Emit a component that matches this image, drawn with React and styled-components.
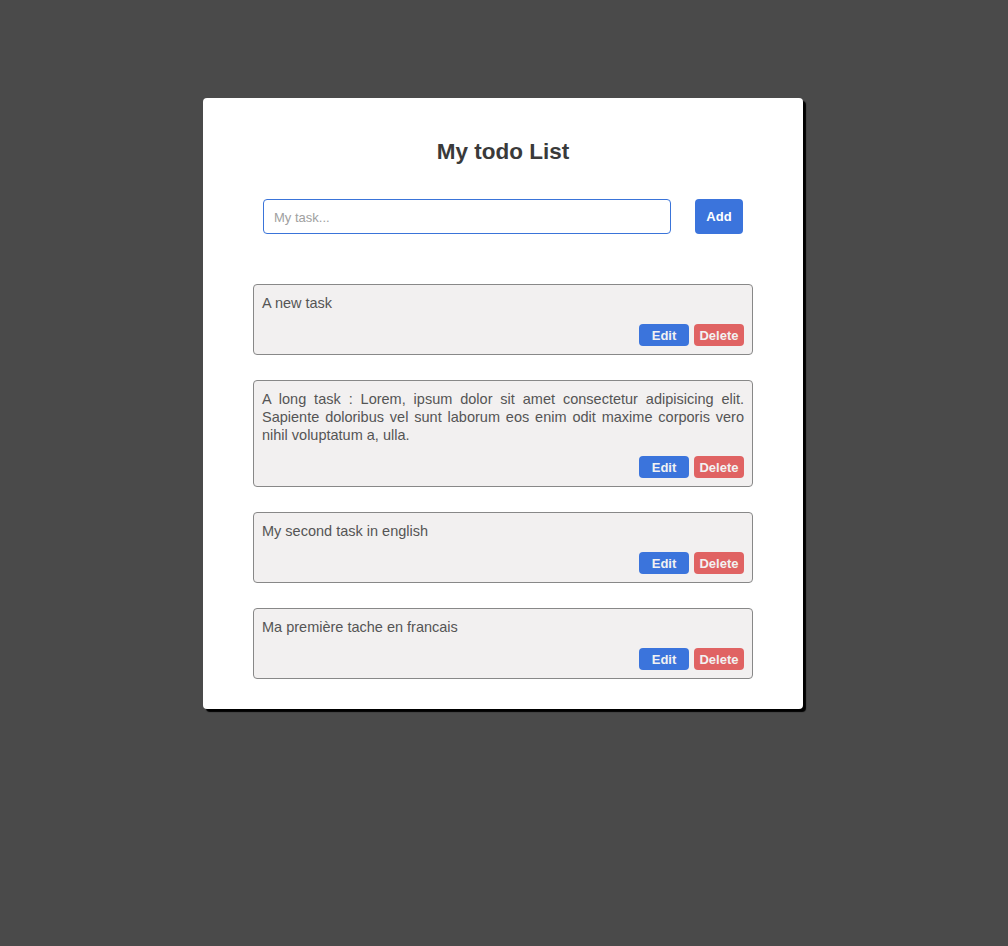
import React from "react";
import styled, { createGlobalStyle } from "styled-components";

const Global = createGlobalStyle`
  html, body { margin: 0; padding: 0; background: #4a4a4a; }
  body { font-family: "Liberation Sans", Arial, sans-serif; }
  * { box-sizing: border-box; }
`;

const Page = styled.div`
  display: flex;
  justify-content: center;
  align-items: flex-start;
  padding: 98px 2px 40px 0;
  min-height: 946px;
`;

const Card = styled.div`
  width: 600px;
  background: #ffffff;
  border-radius: 4px;
  box-shadow: 3px 3px 1px #000;
  padding: 40px 50px 30px 50px;
  display: flex;
  flex-direction: column;
  align-items: center;
`;

const Title = styled.h1`
  margin: 0;
  font-size: 22.5px;
  font-weight: bold;
  line-height: 28px;
  color: #3a3a3a;
`;

const Form = styled.form`
  width: 480px;
  display: flex;
  gap: 24px;
  margin-top: 33px;
`;

const Input = styled.input`
  flex: 1;
  height: 35px;
  border: 1px solid #3a74d9;
  border-radius: 4px;
  padding: 1px 10px 0 10px;
  font-family: "Liberation Sans", Arial, sans-serif;
  font-size: 13px;
  color: #333;
  outline: none;
  &::placeholder { color: #a0a0a0; }
`;

const AddButton = styled.button`
  width: 48px;
  height: 35px;
  border: none;
  border-radius: 4px;
  background: #3b74dc;
  color: #fff;
  font-family: "Liberation Sans", Arial, sans-serif;
  font-weight: bold;
  font-size: 13px;
  cursor: pointer;
`;

const List = styled.ul`
  list-style: none;
  margin: 50px 0 0 0;
  padding: 0;
  width: 500px;
  display: flex;
  flex-direction: column;
  gap: 25px;
`;

const Item = styled.li`
  border: 1px solid #888;
  border-radius: 4px;
  background: #f2f0f0;
  padding: 9px 8px 8px 8px;
  display: flex;
  flex-direction: column;
  gap: 12px;
`;

const ItemText = styled.p`
  margin: 0;
  font-size: 14.5px;
  line-height: 18px;
  color: #555;
  text-align: justify;
`;

const Actions = styled.div`
  display: flex;
  justify-content: flex-end;
  gap: 5px;
`;

const SmallButton = styled.button`
  width: 50px;
  height: 22px;
  border: none;
  border-radius: 4px;
  padding: 0;
  background: ${(p) => (p.$danger ? "#e06363" : "#3b74dc")};
  color: #f2f2f2;
  font-family: "Liberation Sans", Arial, sans-serif;
  font-weight: bold;
  font-size: 13px;
  cursor: pointer;
`;

const tasks = [
  "A new task",
  "A long task : Lorem, ipsum dolor sit amet consectetur adipisicing elit. Sapiente doloribus vel sunt laborum eos enim odit maxime corporis vero nihil voluptatum a, ulla.",
  "My second task in english",
  "Ma première tache en francais",
];

export default function App() {
  return (
    <>
      <Global />
      <Page>
        <Card>
          <Title>My todo List</Title>
          <Form onSubmit={(e) => e.preventDefault()}>
            <Input placeholder="My task..." />
            <AddButton type="submit">Add</AddButton>
          </Form>
          <List>
            {tasks.map((t, i) => (
              <Item key={i}>
                <ItemText>{t}</ItemText>
                <Actions>
                  <SmallButton>Edit</SmallButton>
                  <SmallButton $danger>Delete</SmallButton>
                </Actions>
              </Item>
            ))}
          </List>
        </Card>
      </Page>
    </>
  );
}
